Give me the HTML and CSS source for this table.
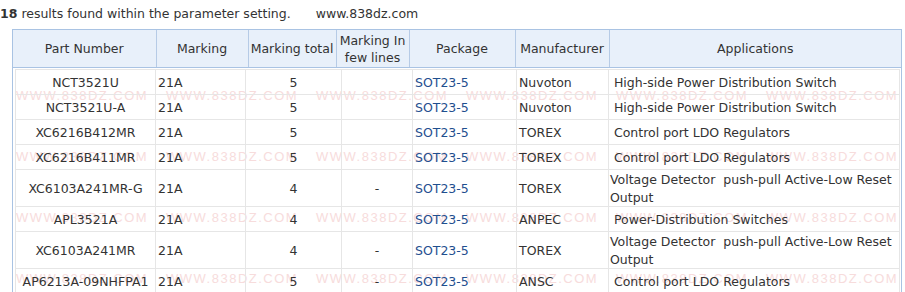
FILE: index.html
```html
<!DOCTYPE html>
<html>
<head>
<meta charset="utf-8">
<link rel="stylesheet" href="styles.css">
</head>
<body>
<div class="summary"><b>18</b> results found within the parameter setting.<span class="site">www.838dz.com</span></div>
<div class="wrap">
  <table class="head">
    <colgroup>
      <col style="width:143px"><col style="width:92px"><col style="width:88px"><col style="width:73px"><col style="width:106px"><col style="width:94px"><col>
    </colgroup>
    <tr>
      <th>Part Number</th><th>Marking</th><th>Marking total</th><th>Marking In few lines</th><th>Package</th><th>Manufacturer</th><th>Applications</th>
    </tr>
  </table>
  <div class="body">
    <div class="wm">
      <span>WWW.838DZ.COM</span><span>WWW.838DZ.COM</span><span>WWW.838DZ.COM</span><span>WWW.838DZ.COM</span><span>WWW.838DZ.COM</span><span>WWW.838DZ.COM</span>
      <span>WWW.838DZ.COM</span><span>WWW.838DZ.COM</span><span>WWW.838DZ.COM</span><span>WWW.838DZ.COM</span><span>WWW.838DZ.COM</span><span>WWW.838DZ.COM</span>
      <span>WWW.838DZ.COM</span><span>WWW.838DZ.COM</span><span>WWW.838DZ.COM</span><span>WWW.838DZ.COM</span><span>WWW.838DZ.COM</span><span>WWW.838DZ.COM</span>
      <span>WWW.838DZ.COM</span><span>WWW.838DZ.COM</span><span>WWW.838DZ.COM</span><span>WWW.838DZ.COM</span><span>WWW.838DZ.COM</span><span>WWW.838DZ.COM</span>
    </div>
    <table class="data">
      <colgroup>
        <col style="width:140px"><col style="width:90px"><col style="width:96px"><col style="width:71px"><col style="width:104px"><col style="width:92px"><col>
      </colgroup>
      <tr><td class="c">NCT3521U</td><td>21A</td><td class="c">5</td><td class="c"></td><td><a>SOT23-5</a></td><td>Nuvoton</td><td class="app">&nbsp;High-side Power Distribution Switch</td></tr>
      <tr><td class="c">NCT3521U-A</td><td>21A</td><td class="c">5</td><td class="c"></td><td><a>SOT23-5</a></td><td>Nuvoton</td><td class="app">&nbsp;High-side Power Distribution Switch</td></tr>
      <tr><td class="c">XC6216B412MR</td><td>21A</td><td class="c">5</td><td class="c"></td><td><a>SOT23-5</a></td><td>TOREX</td><td class="app">&nbsp;Control port LDO Regulators</td></tr>
      <tr><td class="c">XC6216B411MR</td><td>21A</td><td class="c">5</td><td class="c"></td><td><a>SOT23-5</a></td><td>TOREX</td><td class="app">&nbsp;Control port LDO Regulators</td></tr>
      <tr><td class="c">XC6103A241MR-G</td><td>21A</td><td class="c">4</td><td class="c">-</td><td><a>SOT23-5</a></td><td>TOREX</td><td class="app">Voltage Detector&nbsp; push-pull Active-Low Reset Output</td></tr>
      <tr><td class="c">APL3521A</td><td>21A</td><td class="c">4</td><td class="c"></td><td><a>SOT23-5</a></td><td>ANPEC</td><td class="app">&nbsp;Power-Distribution Switches</td></tr>
      <tr><td class="c">XC6103A241MR</td><td>21A</td><td class="c">4</td><td class="c">-</td><td><a>SOT23-5</a></td><td>TOREX</td><td class="app">Voltage Detector&nbsp; push-pull Active-Low Reset Output</td></tr>
      <tr><td class="c">AP6213A-09NHFPA1</td><td>21A</td><td class="c">5</td><td class="c">-</td><td><a>SOT23-5</a></td><td>ANSC</td><td class="app">&nbsp;Control port LDO Regulators</td></tr>
    </table>
  </div>
</div>
</body>
</html>
```
FILE: styles.css
```css
html, body {
  margin: 0;
  padding: 0;
  background: #fff;
}
body {
  font-family: "DejaVu Sans", Verdana, sans-serif;
  font-size: 12.5px;
  color: #333;
}
.summary {
  height: 29px;
  line-height: 27px;
  white-space: pre;
}
.summary b {
  font-weight: bold;
}
.site {
  margin-left: 25px;
}
.wrap {
  margin-left: 12px;
  width: 888px;
  border: 1px solid #a9c3e3;
  border-bottom: none;
  height: 300px;
}
table {
  border-collapse: collapse;
  table-layout: fixed;
}
.head {
  width: 888px;
  background: #e8f0fa;
}
.head th {
  height: 37px;
  padding: 0;
  font-weight: normal;
  text-align: center;
  line-height: 17px;
  border-left: 1px solid #b6cbe6;
  border-bottom: 1px solid #a9c3e3;
}
.head th:first-child {
  border-left: none;
}
.body {
  position: relative;
  padding: 1px 1px 0 2px;
}
.wm {
  position: absolute;
  left: 3px;
  top: 0;
  right: 0;
  bottom: 0;
  overflow: hidden;
  display: grid;
  grid-template-columns: repeat(6, 150px);
  grid-auto-rows: 61px;
  padding-top: 21px;
  font-family: "Liberation Sans", Arial, sans-serif;
  font-size: 13px;
  letter-spacing: 1.5px;
  line-height: 14px;
  color: #f7dcdc;
  white-space: nowrap;
  z-index: 0;
}
.data {
  position: relative;
  z-index: 1;
  width: 885px;
}
.data td {
  height: 23px;
  padding: 1px 2px 0;
  line-height: 17.5px;
  border: 1px solid #e6e6e6;
  vertical-align: middle;
  white-space: nowrap;
}
.data td.c {
  text-align: center;
}
.data td.app {
  white-space: normal;
  padding-left: 1px;
}
.data a {
  color: #1f4f8f;
  text-decoration: none;
}
```
